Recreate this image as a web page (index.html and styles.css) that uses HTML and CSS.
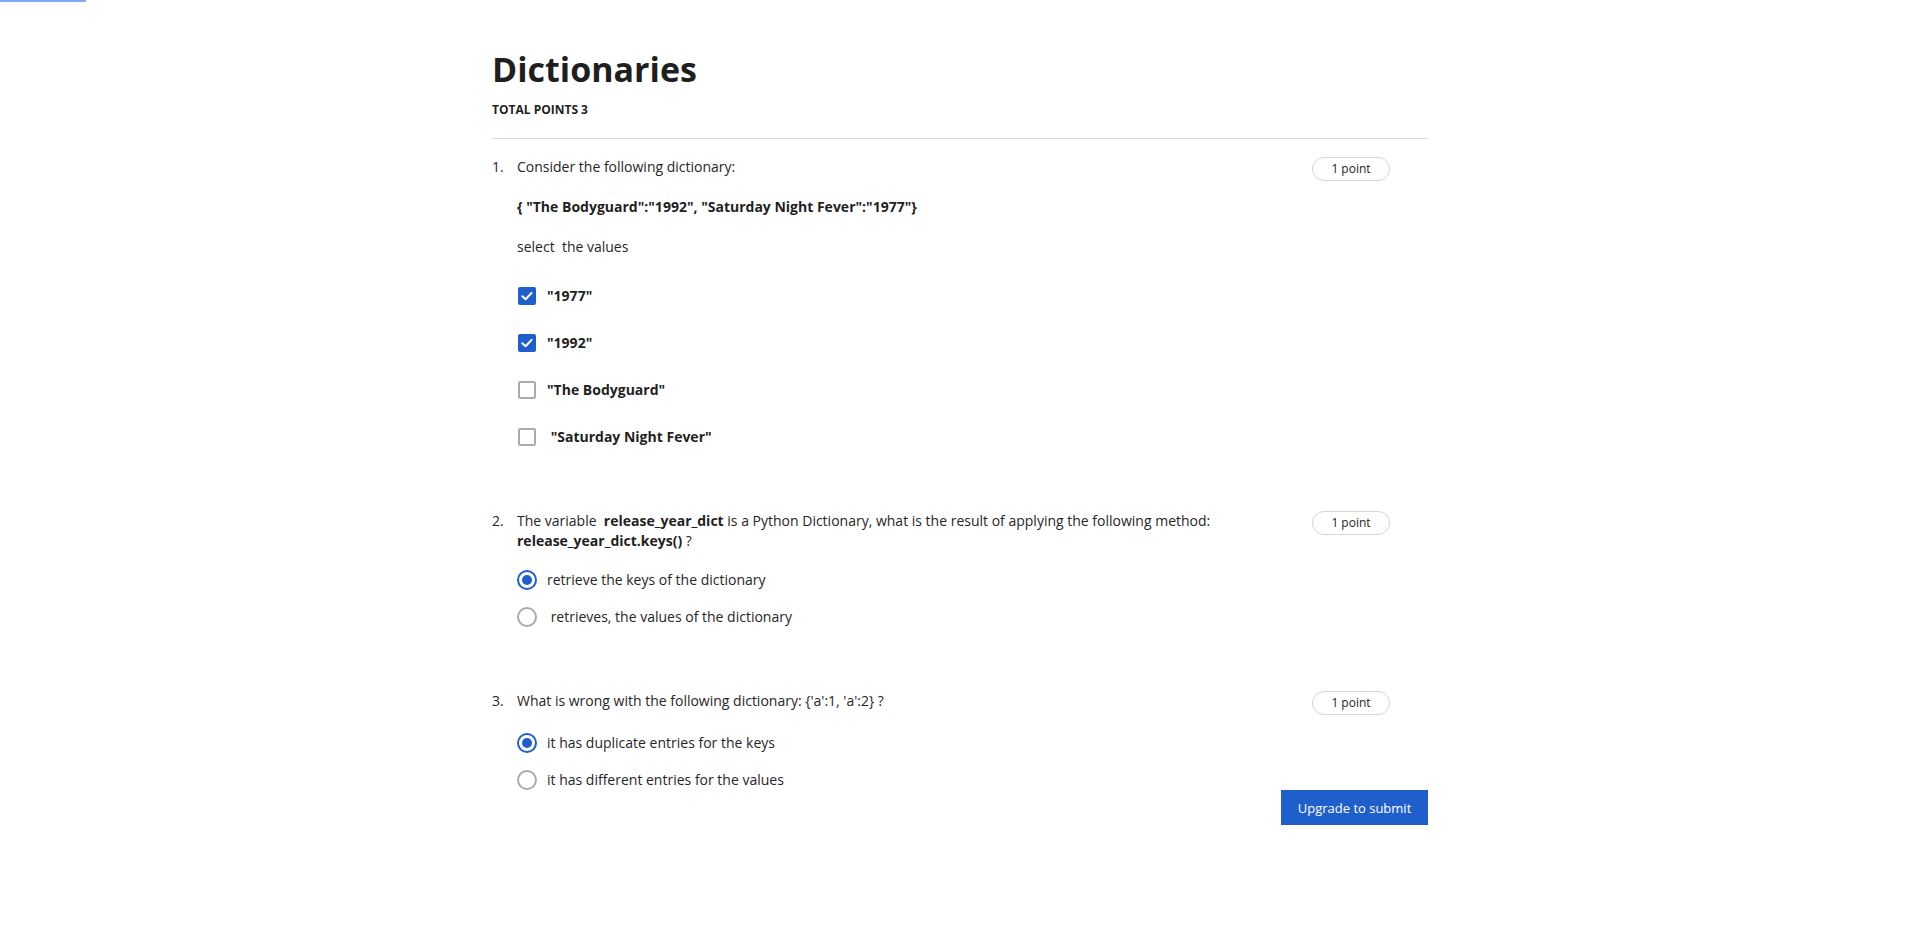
FILE: index.html
```html
<!DOCTYPE html>
<html lang="en">
<head>
<meta charset="utf-8">
<title>Dictionaries</title>
<link rel="stylesheet" href="styles.css">
</head>
<body>
<div class="progress"></div>
<main class="page">
  <header class="head">
    <h1 class="title">Dictionaries</h1>
    <div class="total">TOTAL POINTS 3</div>
  </header>

  <section class="questions">
    <div class="question">
      <div class="qnum">1.</div>
      <div class="qbody">
        <p class="qtext">Consider the following dictionary:</p>
        <p class="qtext"><b>{ "The Bodyguard":"1992", "Saturday Night Fever":"1977"}</b></p>
        <p class="qtext">select&nbsp; the values</p>
        <ul class="options options-check">
          <li class="option"><span class="control"><span class="box checked"><svg viewBox="0 0 18 18" width="18" height="18"><path d="M4.3 9.2 L7.6 12.3 L13.6 5.9" fill="none" stroke="#fff" stroke-width="2" stroke-linecap="round" stroke-linejoin="round"/></svg></span></span><span class="label"><b>"1977"</b></span></li>
          <li class="option"><span class="control"><span class="box checked"><svg viewBox="0 0 18 18" width="18" height="18"><path d="M4.3 9.2 L7.6 12.3 L13.6 5.9" fill="none" stroke="#fff" stroke-width="2" stroke-linecap="round" stroke-linejoin="round"/></svg></span></span><span class="label"><b>"1992"</b></span></li>
          <li class="option"><span class="control"><span class="box"></span></span><span class="label"><b>"The Bodyguard"</b></span></li>
          <li class="option"><span class="control"><span class="box"></span></span><span class="label"><b>&nbsp;"Saturday Night Fever"</b></span></li>
        </ul>
      </div>
      <div class="pill">1 point</div>
    </div>

    <div class="question">
      <div class="qnum">2.</div>
      <div class="qbody">
        <p class="qtext">The variable&nbsp; <b>release_year_dict</b> is a Python Dictionary, what is the result of applying the following method:<br><b>release_year_dict.keys()</b> ?</p>
        <ul class="options options-radio options-tight">
          <li class="option"><span class="control"><span class="radio checked"></span></span><span class="label">retrieve the keys of the dictionary</span></li>
          <li class="option"><span class="control"><span class="radio"></span></span><span class="label">&nbsp;retrieves, the values of the dictionary</span></li>
        </ul>
      </div>
      <div class="pill">1 point</div>
    </div>

    <div class="question">
      <div class="qnum">3.</div>
      <div class="qbody">
        <p class="qtext">What is wrong with the following dictionary: {'a':1, 'a':2} ?</p>
        <ul class="options options-radio">
          <li class="option"><span class="control"><span class="radio checked"></span></span><span class="label">it has duplicate entries for the keys</span></li>
          <li class="option"><span class="control"><span class="radio"></span></span><span class="label">it has different entries for the values</span></li>
        </ul>
      </div>
      <div class="pill">1 point</div>
    </div>
  </section>

  <div class="footer">
    <button class="submit" type="button">Upgrade to submit</button>
  </div>
</main>
</body>
</html>
```
FILE: styles.css
```css
html, body {
  margin: 0;
  padding: 0;
  background: #fff;
}

body {
  font-family: "Open Sans", "Liberation Sans", sans-serif;
  color: #262626;
  font-size: 14px;
  line-height: 20px;
}

.progress {
  position: fixed;
  top: 0;
  left: 0;
  width: 86px;
  height: 2px;
  background: #7fa8f8;
}

.page {
  width: 936px;
  margin: 0 auto;
  padding-top: 49px;
}

.head {
  padding-bottom: 20px;
  border-bottom: 1px solid #dadada;
}

.title {
  margin: 0;
  font-size: 34px;
  line-height: 40px;
  font-weight: 700;
  color: #1f1f1f;
}

.total {
  margin-top: 13px;
  font-size: 12px;
  line-height: 16px;
  font-weight: 700;
  color: #1f1f1f;
}

.questions {
  padding-top: 18px;
}

.question {
  display: flex;
  align-items: flex-start;
  padding-right: 38px;
  margin-bottom: 64px;
}

.question + .question + .question {
  margin-top: 1px;
}

.question:last-child {
  margin-bottom: 0;
}

.qnum {
  width: 25px;
  flex: none;
}

.qbody {
  flex: 1;
  min-width: 0;
}

.qtext {
  margin: 0;
}

.qtext + .qtext {
  margin-top: 20px;
}

.qtext b,
.label b {
  color: #1f1f1f;
}

.options {
  list-style: none;
  margin: 0;
  padding: 0;
  display: flex;
  flex-direction: column;
}

.options-check {
  margin-top: 29px;
  gap: 27px;
}

.options-radio {
  margin-top: 22px;
  gap: 17px;
}

.options-tight {
  margin-top: 19px;
}

.option {
  display: flex;
  align-items: center;
  height: 20px;
  gap: 10px;
}

.control {
  width: 20px;
  height: 20px;
  flex: none;
  display: flex;
  align-items: center;
  justify-content: center;
}

.box {
  width: 18px;
  height: 18px;
  box-sizing: border-box;
  border: 2px solid #ababab;
  border-radius: 2px;
  display: flex;
}

.box.checked {
  border: none;
  background: #1f5fcc;
}

.radio {
  width: 20px;
  height: 20px;
  box-sizing: border-box;
  border: 2px solid #ababab;
  border-radius: 50%;
  display: flex;
  align-items: center;
  justify-content: center;
}

.radio.checked {
  border-color: #1f5fcc;
}

.radio.checked::after {
  content: "";
  width: 10px;
  height: 10px;
  border-radius: 50%;
  background: #1f5fcc;
}

.pill {
  flex: none;
  width: 78px;
  height: 24px;
  box-sizing: border-box;
  border: 1px solid #d6d6d6;
  border-radius: 12px;
  font-size: 12px;
  line-height: 22px;
  text-align: center;
  color: #262626;
}

.footer {
  display: flex;
  justify-content: flex-end;
}

.submit {
  width: 147px;
  height: 35px;
  border: none;
  border-radius: 0;
  background: #1f5fcc;
  color: #fff;
  font-family: "Open Sans", "Liberation Sans", sans-serif;
  font-size: 13px;
  padding: 0;
  cursor: pointer;
}
```
